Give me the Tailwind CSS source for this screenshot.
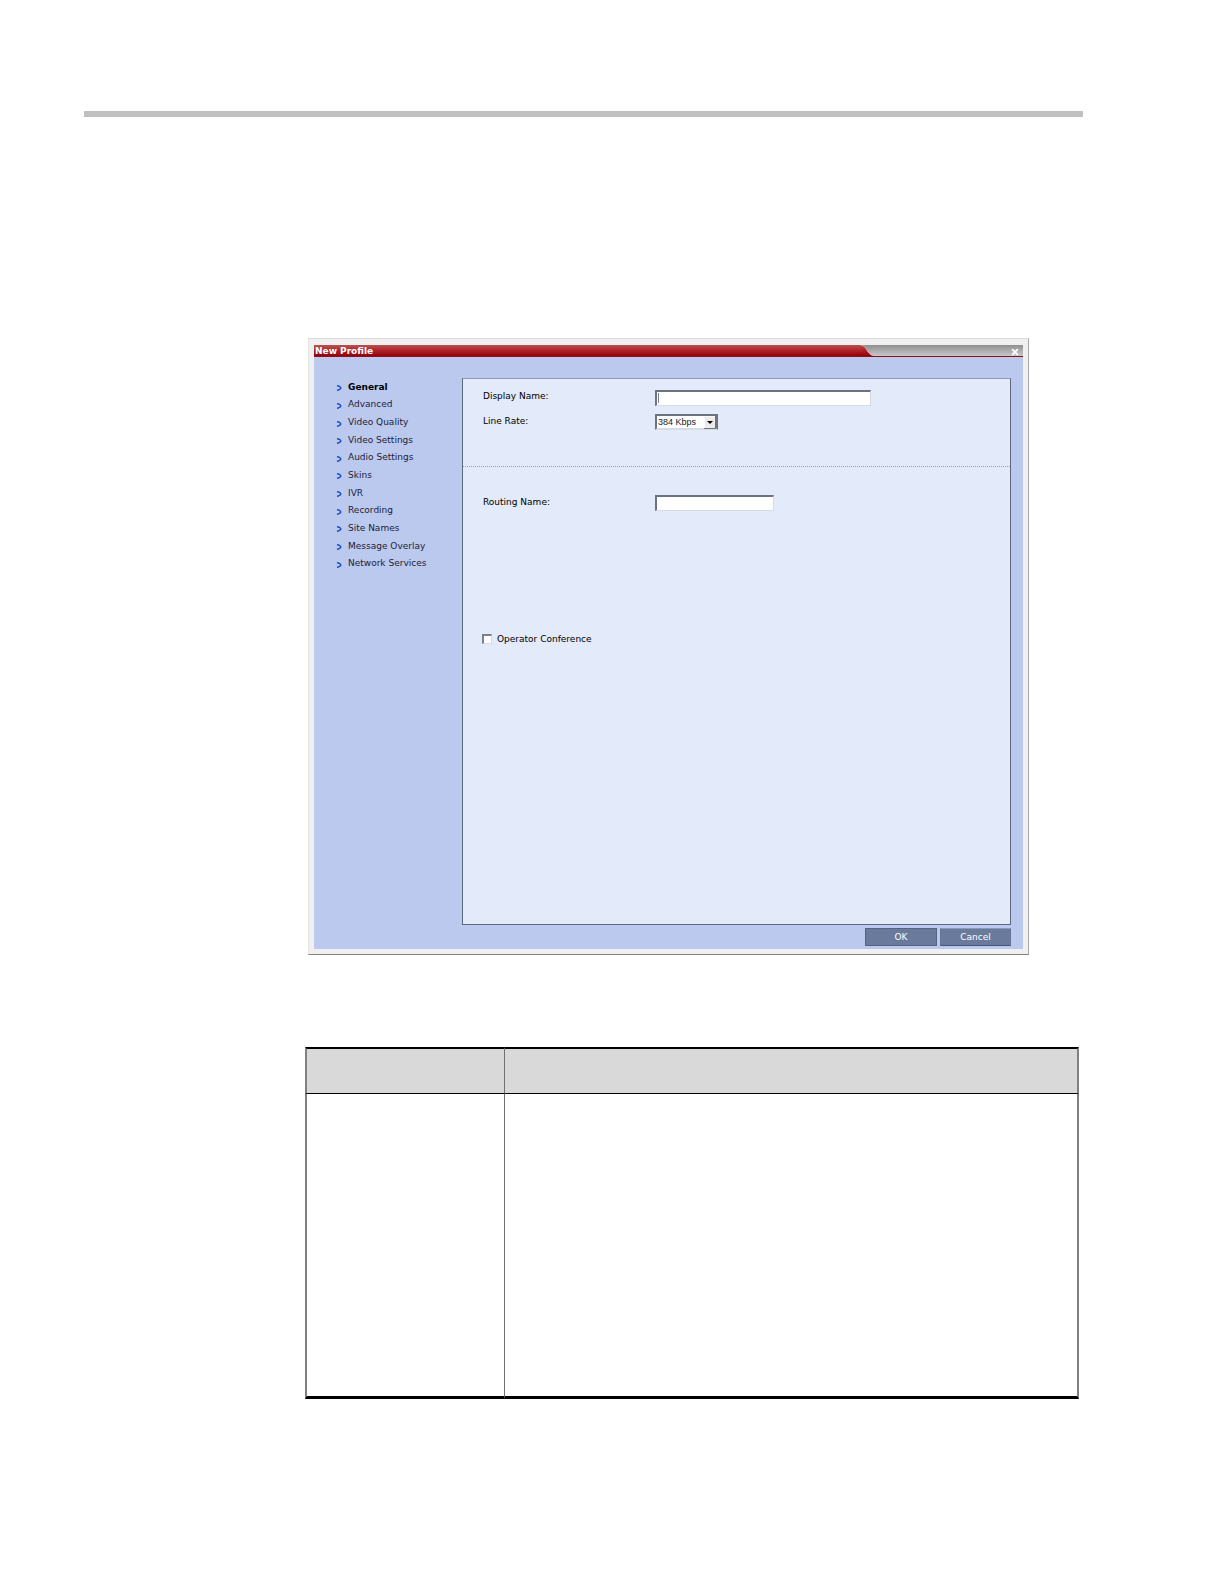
<!DOCTYPE html>
<html lang="en">
<head>
<meta charset="utf-8">
<title>New Profile</title>
<script src="https://cdn.jsdelivr.net/npm/@tailwindcss/browser@4"></script>
</head>
<body class="min-h-screen bg-white pt-[111px] font-['DejaVu_Sans',sans-serif] text-[9px] leading-3 text-[#1c1c38]">
<svg class="hidden" aria-hidden="true">
  <symbol id="chevron" viewBox="0 0 6 6"><path d="M1 .6 3 1.2Q5 2.2 4.8 3.2 4.6 4.6 1 5.4" fill="none" stroke="#1b4fc0" stroke-width="1.5"/></symbol>
</svg>
<header class="ml-[84px] mr-[141px] h-1.5 bg-[#c0c0c0]"></header>

<main>
  <section aria-labelledby="title" class="mt-[221px] ml-[308px] mr-[195px] border border-t-[#dcdcdc] border-r-[#a8a8a8] border-b-[#808080] border-l-[#e4e4e4] bg-[#f0f0f0] px-[5px] pt-1.5 pb-[5px]">
    <div class="flex h-3 border-b border-[#8c0f1c] bg-linear-to-b from-[#8f8f8f] to-[#cbc7c9]">
      <div class="h-[11px] w-[546px] bg-linear-to-b from-[#b85050] via-[#b02028] to-[#920008] pl-px">
        <h1 id="title" class="text-[9px] leading-3 font-bold text-white">New Profile</h1>
      </div>
      <svg class="h-[11px] w-[14px]" viewBox="0 0 14 11" aria-hidden="true">
        <defs><linearGradient id="red" x1="0" y1="0" x2="0" y2="1"><stop stop-color="#b85050"/><stop offset=".5" stop-color="#b02028"/><stop offset="1" stop-color="#920008"/></linearGradient></defs>
        <path d="M0 0C5 0 6 4 8 7Q10 10 14 11H0Z" fill="url(#red)"/>
        <path d="M0 0C5 0 6 4 8 7Q10 10 14 11" fill="none" stroke="#e3c5c5" stroke-width=".6"/>
      </svg>
      <button type="button" aria-label="Close" class="ml-auto mr-1 flex h-[11px] w-2 items-center">
        <svg class="mt-0.5 size-2" viewBox="0 0 8 8" aria-hidden="true"><path d="M1.2 1.2l5.6 5.6M6.8 1.2 1.2 6.8" stroke="#fff" stroke-width="1.8"/></svg>
      </button>
    </div>

    <div class="flex bg-[#bbc9ee] pt-[21px] pr-3">
      <nav aria-label="Profile sections" class="w-[148px] shrink-0 pl-[22px]">
        <ul class="grid h-[194px] auto-rows-fr items-center">
          <li><a href="#" class="flex items-center gap-1.5 font-bold text-black"><svg class="mt-[3px] size-1.5"><use href="#chevron"/></svg>General</a></li>
          <li><a href="#" class="flex items-center gap-1.5"><svg class="mt-[3px] size-1.5"><use href="#chevron"/></svg>Advanced</a></li>
          <li><a href="#" class="flex items-center gap-1.5"><svg class="mt-[3px] size-1.5"><use href="#chevron"/></svg>Video Quality</a></li>
          <li><a href="#" class="flex items-center gap-1.5"><svg class="mt-[3px] size-1.5"><use href="#chevron"/></svg>Video Settings</a></li>
          <li><a href="#" class="flex items-center gap-1.5"><svg class="mt-[3px] size-1.5"><use href="#chevron"/></svg>Audio Settings</a></li>
          <li><a href="#" class="flex items-center gap-1.5"><svg class="mt-[3px] size-1.5"><use href="#chevron"/></svg>Skins</a></li>
          <li><a href="#" class="flex items-center gap-1.5"><svg class="mt-[3px] size-1.5"><use href="#chevron"/></svg>IVR</a></li>
          <li><a href="#" class="flex items-center gap-1.5"><svg class="mt-[3px] size-1.5"><use href="#chevron"/></svg>Recording</a></li>
          <li><a href="#" class="flex items-center gap-1.5"><svg class="mt-[3px] size-1.5"><use href="#chevron"/></svg>Site Names</a></li>
          <li><a href="#" class="flex items-center gap-1.5"><svg class="mt-[3px] size-1.5"><use href="#chevron"/></svg>Message Overlay</a></li>
          <li><a href="#" class="flex items-center gap-1.5"><svg class="mt-[3px] size-1.5"><use href="#chevron"/></svg>Network Services</a></li>
        </ul>
      </nav>

      <form id="profile" class="min-h-[547px] grow border border-[#5c6880] border-t-[#8c9cb8] bg-[#e3eaf9] text-black">
        <div class="grid grid-cols-[172px_1fr] gap-y-2 border-b border-dotted border-[#98a1b8] pt-[11px] pb-9 pl-5">
          <label for="name">Display Name:</label>
          <div class="relative w-[216px]">
            <input id="name" type="text" class="block h-4 w-full border-t-2 border-l-2 border-r border-b border-t-[#6c737f] border-l-[#6c737f] border-r-[#d5dae4] border-b-[#d5dae4] bg-white px-1 outline-none">
            <span class="pointer-events-none absolute top-[3px] left-[3px] h-2.5 w-px bg-[#808080]" aria-hidden="true"></span>
          </div>
          <label for="rate" class="pt-px">Line Rate:</label>
          <div class="relative h-4 w-[63px]">
            <select id="rate" class="block h-4 w-full appearance-none border-2 border-r-[#6c737f] border-t-[#6c737f] border-l-[#6c737f] border-b-[#d5dae4] bg-white pl-px font-['Liberation_Sans',sans-serif] text-[9px] leading-3 text-[#202020]"><option>384 Kbps</option></select>
            <svg class="pointer-events-none absolute top-0.5 right-0.5 h-[13px] w-3" viewBox="0 0 12 13" aria-hidden="true"><path d="M0 0h12v13H0z" fill="#70757e"/><path d="M0 0h11v12H0z" fill="#fafafa"/><path d="M1 1h10v11H1z" fill="#ebebe9"/><path d="M3 5h6L6 8z" fill="#000"/></svg>
          </div>
        </div>
        <div class="grid grid-cols-[172px_1fr] pt-7 pl-5">
          <label for="routing" class="pt-px">Routing Name:</label>
          <input id="routing" type="text" class="h-4 w-[119px] border-t-2 border-l-2 border-r border-b border-t-[#6c737f] border-l-[#6c737f] border-r-[#d5dae4] border-b-[#d5dae4] bg-white px-1">
        </div>
        <label class="mt-[122px] ml-[19px] flex w-fit items-center gap-[5px]">
          <input type="checkbox" class="size-2.5 appearance-none border-t-2 border-l-2 border-r border-b border-t-[#7c828c] border-l-[#7c828c] border-r-[#d5dae4] border-b-[#d5dae4] bg-white checked:bg-[#5c6880]">
          Operator Conference
        </label>
      </form>
    </div>

    <div class="flex justify-end gap-[3px] bg-[#bbc9ee] pt-[3px] pr-3 pb-[3px] text-white">
      <button type="submit" form="profile" class="h-[18px] w-[72px] border border-[#556481] bg-[#6a7a9c]">OK</button>
      <button type="button" class="h-[18px] w-[71px] border border-t-[#8a99b8] border-x-[#667696] border-b-[#46577a] bg-[#6a7a9c]">Cancel</button>
    </div>
  </section>

  <div class="mt-[92px] ml-[305px] mr-[145px]">
    <table class="w-full table-fixed border-separate border-spacing-0" aria-label="Field descriptions">
      <colgroup><col class="w-[200px]"><col></colgroup>
      <thead>
        <tr class="h-[47px] bg-[#d9d9d9]">
          <th class="border-t-2 border-b border-l-2 border-r border-t-black border-b-black border-l-[#808080] border-r-[#707070]"></th>
          <th class="border-t-2 border-b border-r-2 border-t-black border-b-black border-r-[#808080]"></th>
        </tr>
      </thead>
      <tbody>
        <tr class="h-[305px]">
          <td class="border-b-3 border-l-2 border-r border-b-black border-l-[#808080] border-r-[#707070]"></td>
          <td class="border-b-3 border-r-2 border-b-black border-r-[#808080]"></td>
        </tr>
      </tbody>
    </table>
  </div>
</main>
</body>
</html>
